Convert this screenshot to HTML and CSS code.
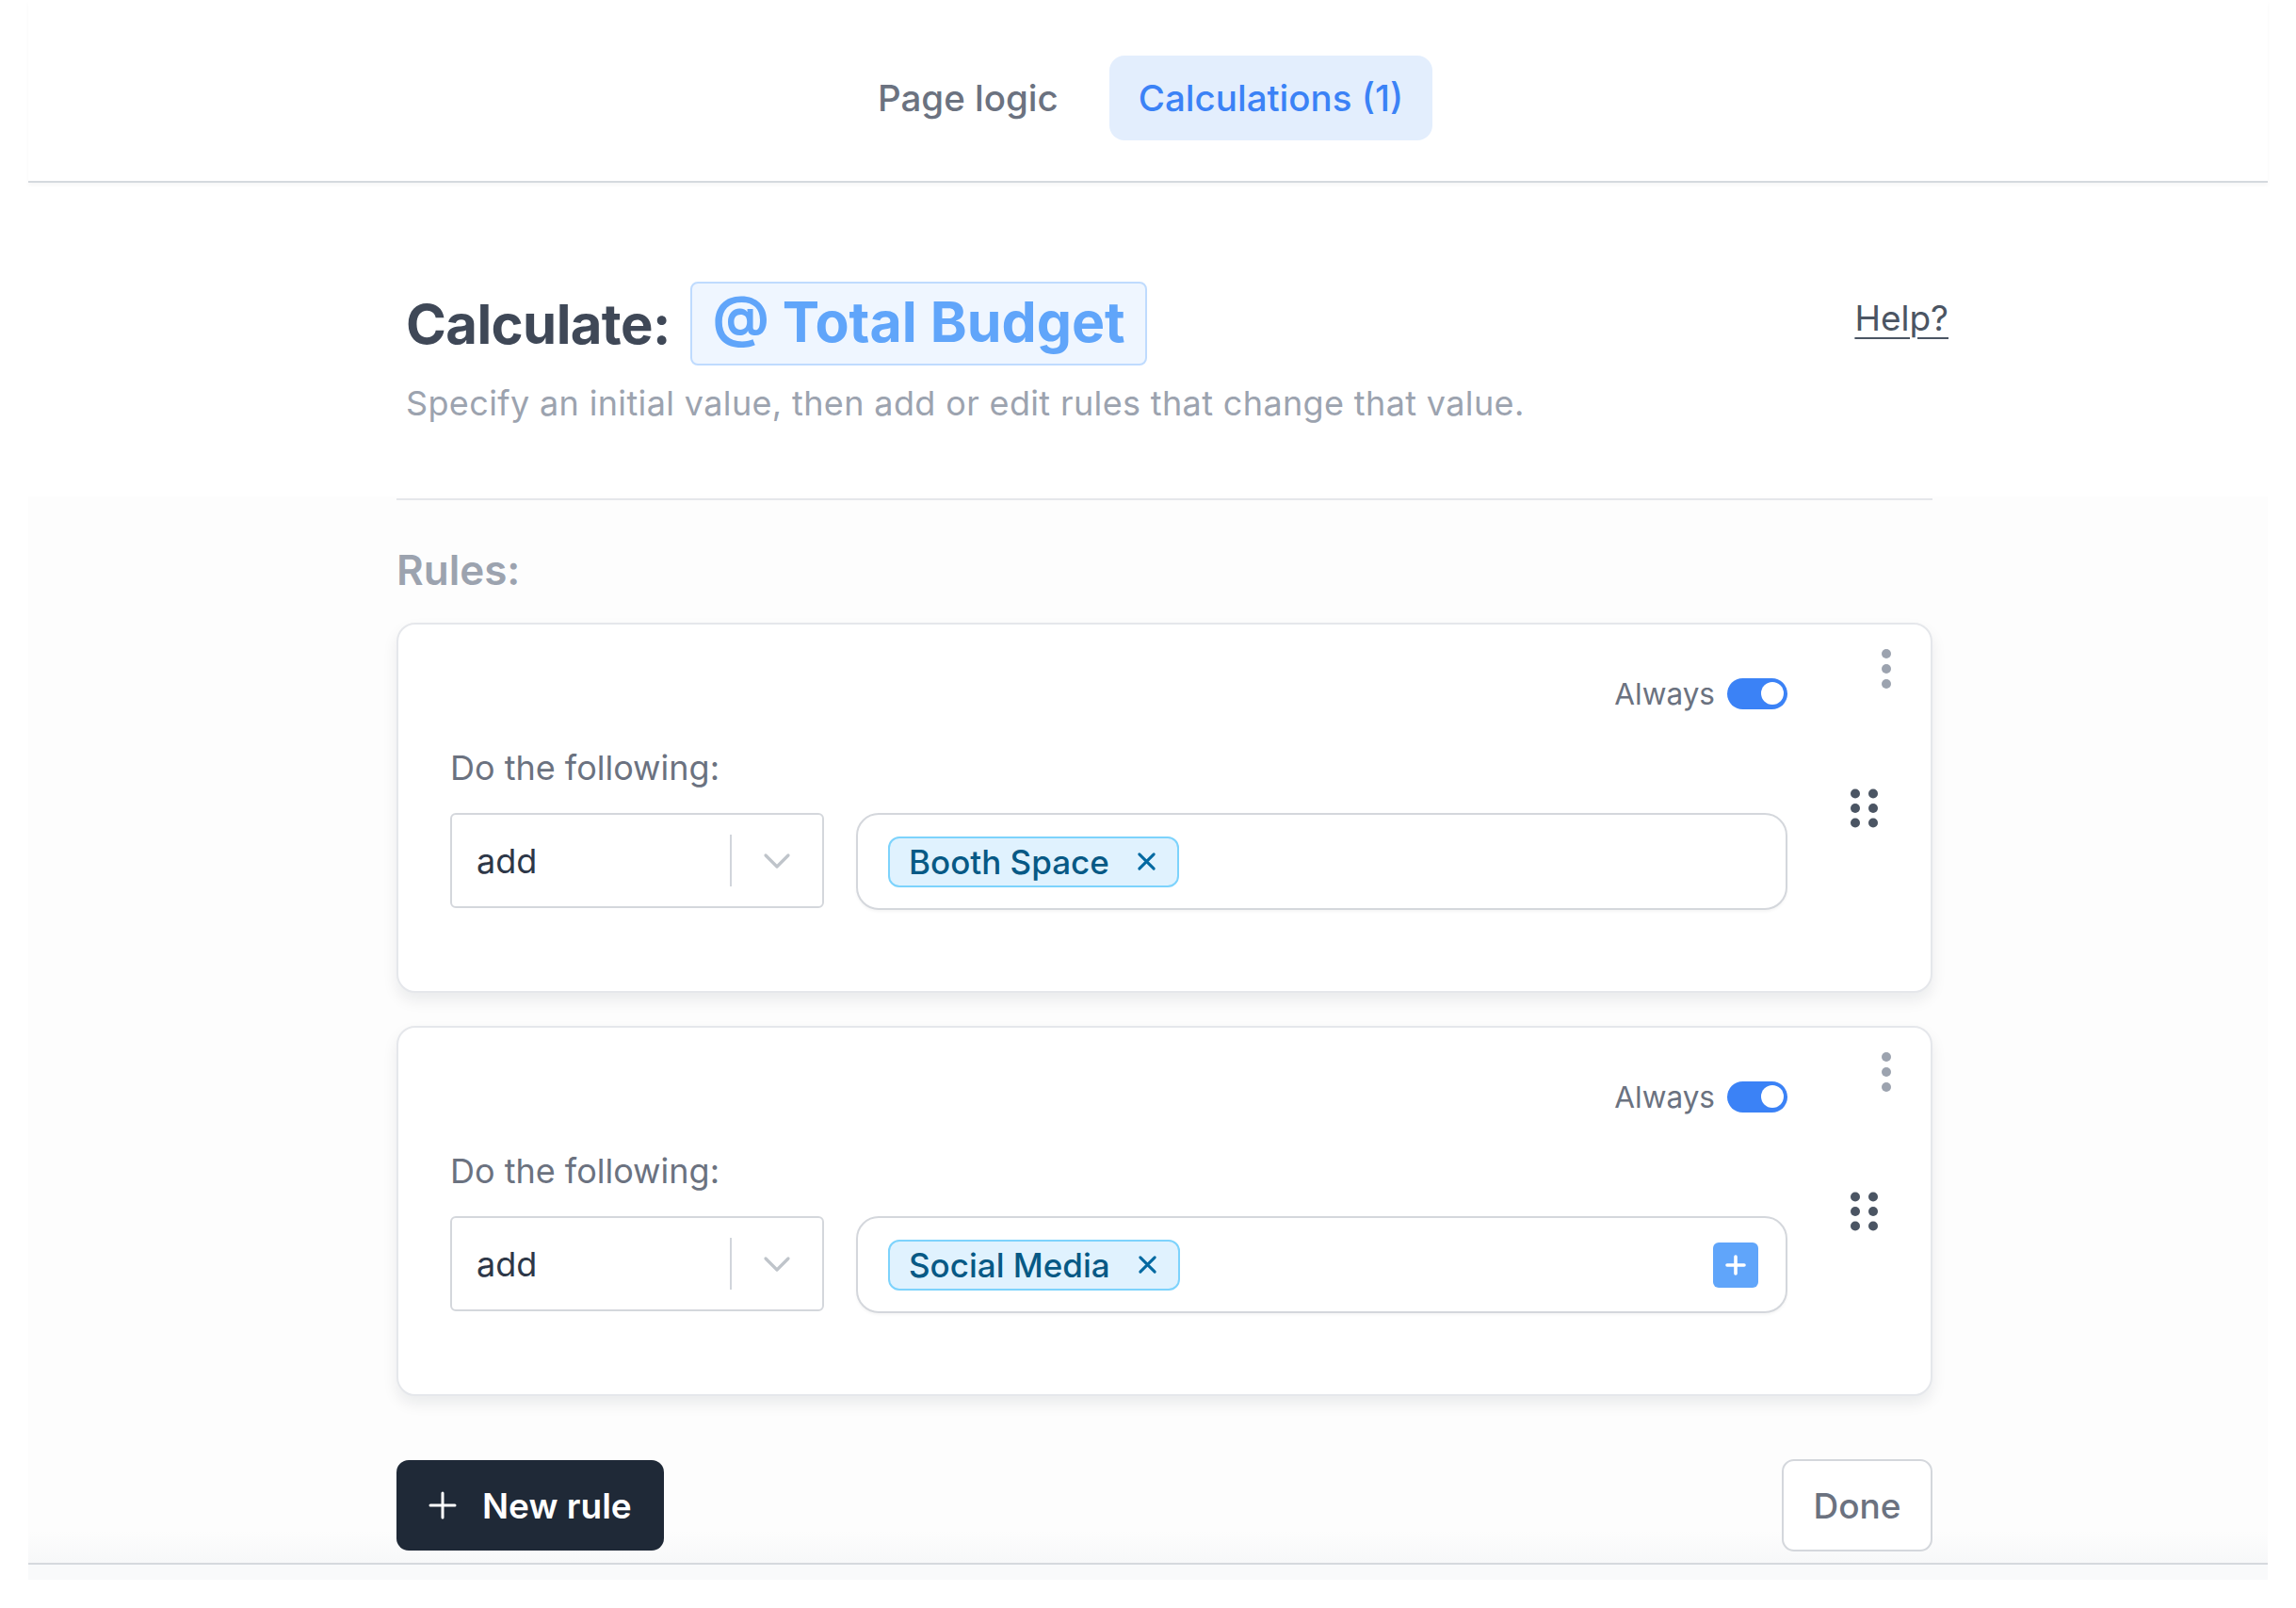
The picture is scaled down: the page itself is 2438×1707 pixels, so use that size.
FILE: index.html
```html
<!DOCTYPE html>
<html lang="en">
<head>
<meta charset="utf-8">
<title>Calculations</title>
<link rel="stylesheet" href="styles.css">
</head>
<body>
<main class="frame">
  <nav class="tabs">
    <span class="tab">Page logic</span>
    <span class="tab tab-active">Calculations (1)</span>
  </nav>

  <header class="calc-header">
    <div class="title-row">
      <h1 class="title"><span class="title-text">Calculate:</span> <span class="var-pill">@ Total Budget</span></h1>
      <a class="help" href="#">Help?</a>
    </div>
    <p class="subtitle">Specify an initial value, then add or edit rules that change that value.</p>
  </header>

  <section class="rules-area">
    <div class="rules-inner">
      <h2 class="rules-title">Rules:</h2>

      <div class="rule-card">
        <div class="rule-main">
          <div class="toggle-row">
            <span class="toggle-label">Always</span>
            <span class="toggle"><span class="knob"></span></span>
          </div>
          <div class="do-label">Do the following:</div>
          <div class="controls">
            <div class="select">
              <span class="select-value">add</span>
              <span class="select-sep"></span>
              <span class="select-arrow">
                <svg width="30" height="18" viewBox="0 0 30 18"><polyline points="3,3 15,15 27,3" fill="none" stroke="#bfc4ca" stroke-width="3.2" stroke-linecap="round" stroke-linejoin="round"/></svg>
              </span>
            </div>
            <div class="field">
              <span class="tag">Booth Space
                <svg class="tag-x" width="23" height="23" viewBox="0 0 24 24"><path d="M4 4 L20 20 M20 4 L4 20" stroke="#0369a1" stroke-width="3.2" stroke-linecap="round"/></svg>
              </span>
            </div>
          </div>
        </div>
        <div class="rule-side">
          <svg class="kebab" width="12" height="44" viewBox="0 0 12 44"><circle cx="6" cy="6" r="5" fill="#9ca3af"/><circle cx="6" cy="22" r="5" fill="#9ca3af"/><circle cx="6" cy="38" r="5" fill="#9ca3af"/></svg>
          <svg class="grip" width="31" height="42" viewBox="0 0 31 42"><circle cx="6" cy="5.5" r="5" fill="#4b5563"/><circle cx="25" cy="5.5" r="5" fill="#4b5563"/><circle cx="6" cy="21" r="5" fill="#4b5563"/><circle cx="25" cy="21" r="5" fill="#4b5563"/><circle cx="6" cy="36.5" r="5" fill="#4b5563"/><circle cx="25" cy="36.5" r="5" fill="#4b5563"/></svg>
        </div>
      </div>

      <div class="rule-card">
        <div class="rule-main">
          <div class="toggle-row">
            <span class="toggle-label">Always</span>
            <span class="toggle"><span class="knob"></span></span>
          </div>
          <div class="do-label">Do the following:</div>
          <div class="controls">
            <div class="select">
              <span class="select-value">add</span>
              <span class="select-sep"></span>
              <span class="select-arrow">
                <svg width="30" height="18" viewBox="0 0 30 18"><polyline points="3,3 15,15 27,3" fill="none" stroke="#bfc4ca" stroke-width="3.2" stroke-linecap="round" stroke-linejoin="round"/></svg>
              </span>
            </div>
            <div class="field">
              <span class="tag">Social Media
                <svg class="tag-x" width="23" height="23" viewBox="0 0 24 24"><path d="M4 4 L20 20 M20 4 L4 20" stroke="#0369a1" stroke-width="3.2" stroke-linecap="round"/></svg>
              </span>
              <span class="add-btn">
                <svg width="24" height="24" viewBox="0 0 24 24"><path d="M12 3 V21 M3 12 H21" stroke="#ffffff" stroke-width="3.6" stroke-linecap="round"/></svg>
              </span>
            </div>
          </div>
        </div>
        <div class="rule-side">
          <svg class="kebab" width="12" height="44" viewBox="0 0 12 44"><circle cx="6" cy="6" r="5" fill="#9ca3af"/><circle cx="6" cy="22" r="5" fill="#9ca3af"/><circle cx="6" cy="38" r="5" fill="#9ca3af"/></svg>
          <svg class="grip" width="31" height="42" viewBox="0 0 31 42"><circle cx="6" cy="5.5" r="5" fill="#4b5563"/><circle cx="25" cy="5.5" r="5" fill="#4b5563"/><circle cx="6" cy="21" r="5" fill="#4b5563"/><circle cx="25" cy="21" r="5" fill="#4b5563"/><circle cx="6" cy="36.5" r="5" fill="#4b5563"/><circle cx="25" cy="36.5" r="5" fill="#4b5563"/></svg>
        </div>
      </div>

      <div class="actions">
        <button class="btn-new">
          <svg width="30" height="30" viewBox="0 0 30 30"><path d="M15 2 V28 M2 15 H28" stroke="#ffffff" stroke-width="3" stroke-linecap="round"/></svg>
          <span>New rule</span>
        </button>
        <button class="btn-done">Done</button>
      </div>
    </div>
  </section>
  <div class="bottom-strip"></div>
</main>
</body>
</html>
```

FILE: styles.css
```css
* { box-sizing: border-box; }

html, body {
  margin: 0;
  padding: 0;
  background: #ffffff;
  font-family: Inter, "Noto Sans", "Liberation Sans", sans-serif;
}

.frame {
  margin: 0 30px;
}

/* Tabs */
.tabs {
  display: flex;
  justify-content: center;
  gap: 23px;
  padding-top: 59px;
  padding-bottom: 43px;
  padding-right: 16px;
  border-bottom: 2px solid #d5d9de;
  box-shadow: 0 3px 4px rgba(0, 0, 0, 0.03);
}

.tab {
  display: flex;
  align-items: center;
  height: 90px;
  padding: 0 31px;
  border-radius: 16px;
  font-size: 38.5px;
  font-weight: 500;
  color: #6b7280;
}

.tab-active {
  background: #e3eefd;
  color: #3b82f6;
}

/* Header */
.calc-header {
  margin-left: 401px;
  width: 1638px;
  padding-top: 105px;
  padding-bottom: 74px;
}

.title-row {
  display: flex;
  align-items: center;
  justify-content: space-between;
}

.title {
  margin: 0;
  display: flex;
  align-items: center;
  gap: 21px;
  font-size: 58px;
  font-weight: 700;
  color: #3f4857;
  line-height: 1;
}

.title-text {
  letter-spacing: -0.01em;
}

.var-pill {
  display: flex;
  align-items: center;
  height: 89px;
  padding: 0 21px 4px 22px;
  border: 2px solid #bfdbfe;
  border-radius: 8px;
  background: #eff6ff;
  color: #60a5fa;
  font-size: 59px;
}

.help {
  font-size: 37px;
  color: #4b5563;
  text-decoration: underline;
  text-underline-offset: 7px;
  text-decoration-thickness: 2px;
  margin-bottom: 12px;
}

.subtitle {
  margin: 15px 0 0 0;
  font-size: 36px;
  line-height: 50px;
  letter-spacing: 0.01em;
  color: #9ca3af;
}

/* Rules area */
.rules-area {
  background: linear-gradient(to bottom, #fdfdfd 0, #fdfdfd calc(100% - 34px), #f7f8f9 100%);
  padding-top: 2px;
  padding-bottom: 12px;
}

.rules-inner {
  margin-left: 391px;
  width: 1631px;
  border-top: 2px solid #e5e7eb;
}

.rules-title {
  margin: 47px 0 29px 0;
  font-size: 44px;
  line-height: 54px;
  font-weight: 600;
  color: #9ca3af;
}

.rule-card {
  display: flex;
  height: 393px;
  margin-bottom: 35px;
  background: #ffffff;
  border: 2px solid #e5e7eb;
  border-radius: 20px;
  box-shadow: 0 8px 16px rgba(17, 24, 39, 0.08);
}

.rule-main {
  flex: 1;
  padding: 56px 0 0 55px;
}

.toggle-row {
  display: flex;
  justify-content: flex-end;
  align-items: center;
  gap: 13px;
  height: 34px;
}

.toggle-label {
  font-size: 31.5px;
  color: #6b7280;
}

.toggle {
  display: flex;
  align-items: center;
  justify-content: flex-end;
  width: 64px;
  height: 33px;
  padding: 0 4px;
  border-radius: 17px;
  background: #3b82f6;
}

.knob {
  width: 24px;
  height: 24px;
  border-radius: 50%;
  background: #ffffff;
}

.do-label {
  margin-top: 40px;
  font-size: 36px;
  line-height: 44px;
  color: #6b7280;
}

.controls {
  display: flex;
  gap: 34px;
  margin-top: 26px;
}

.select {
  display: flex;
  align-items: center;
  width: 397px;
  height: 101px;
  border: 2px solid #d4d7dc;
  border-radius: 6px;
  background: #ffffff;
  padding-left: 26px;
}

.select-value {
  flex: 1;
  font-size: 36px;
  color: #2d3748;
}

.select-sep {
  width: 2px;
  height: 55px;
  background: #d1d5db;
}

.select-arrow {
  display: flex;
  align-items: center;
  justify-content: center;
  width: 96px;
}

.field {
  flex: 1;
  display: flex;
  align-items: center;
  justify-content: space-between;
  height: 103px;
  padding: 0 29px 0 32px;
  border: 2px solid #d4d7dc;
  border-radius: 24px;
  background: #ffffff;
  box-shadow: 0 2px 3px rgba(0, 0, 0, 0.04);
}

.tag {
  display: flex;
  align-items: center;
  gap: 28px;
  height: 54px;
  padding: 0 21px 0 20px;
  border: 2px solid #7dd3fc;
  border-radius: 12px;
  background: #e0f2fe;
  font-size: 35px;
  font-weight: 500;
  color: #075985;
}

.add-btn {
  display: flex;
  align-items: center;
  justify-content: center;
  width: 48px;
  height: 48px;
  border-radius: 6px;
  background: #60a5fa;
}

.rule-side {
  width: 152px;
  display: grid;
  grid-template-rows: 1fr auto 1fr;
  padding: 25px 0;
}

.kebab {
  display: block;
  margin-left: 99px;
  align-self: start;
}

.grip {
  display: block;
  margin-left: 66px;
}

/* Actions */
.actions {
  display: flex;
  justify-content: space-between;
  align-items: center;
  margin-top: 67px;
}

.btn-new {
  display: flex;
  align-items: center;
  gap: 27px;
  height: 96px;
  padding: 0 34px;
  border: none;
  border-radius: 13px;
  background: #1f2937;
  color: #ffffff;
  font-family: inherit;
  font-size: 37px;
  font-weight: 600;
}

.btn-done {
  width: 160px;
  height: 98px;
  border: 2px solid #d4d7dc;
  border-radius: 13px;
  background: #ffffff;
  color: #6b7280;
  font-family: inherit;
  font-size: 37px;
  font-weight: 500;
}

.bottom-strip {
  height: 18px;
  border-top: 2px solid #d5d9de;
  background: #f9fafb;
}
```
